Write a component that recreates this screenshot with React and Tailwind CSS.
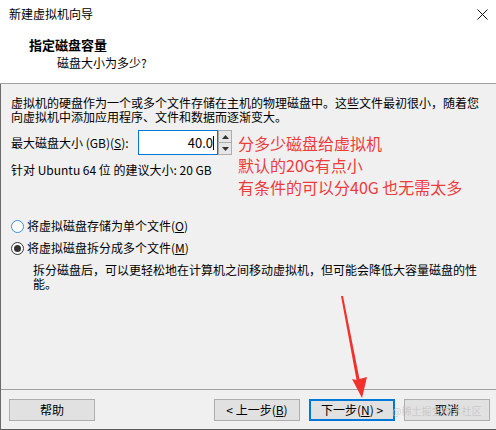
import React from 'react';

const FONT = { fontFamily: '"Noto Sans CJK SC", "Noto Sans", sans-serif' };

function Btn({ children, primary }) {
  return (
    <div
      className={
        'w-[86px] h-[22px] flex items-center justify-center text-[12px] text-black bg-[#e1e1e1] ' +
        (primary ? 'border-2 border-[#0078d7]' : 'border border-[#adadad]')
      }
    >
      {children}
    </div>
  );
}

function Radio({ checked }) {
  return (
    <div
      className={
        'w-[13px] h-[13px] rounded-full bg-white flex items-center justify-center border ' +
        (checked ? 'border-[#333333]' : 'border-[#3c8fd6]')
      }
    >
      {checked && <div className="w-[7px] h-[7px] rounded-full bg-[#333333]" />}
    </div>
  );
}

export default function App() {
  return (
    <div className="w-[496px] h-[430px] relative overflow-hidden flex flex-col text-black" style={FONT}>
      {/* header */}
      <div className="h-[84px] bg-white border-b border-[#a0a0a0] flex flex-col">
        <div className="h-[28px] flex items-center justify-between pl-[9px] pr-[8px]">
          <span className="text-[12px] leading-[14px]">新建虚拟机向导</span>
          <svg width="11" height="11" viewBox="0 0 11 11">
            <path d="M0.5 0.5 L10.5 10.5 M10.5 0.5 L0.5 10.5" stroke="#111" strokeWidth="1" />
          </svg>
        </div>
        <div className="pl-[29px] mt-[8px] text-[13px] leading-[17px] font-bold">指定磁盘容量</div>
        <div className="pl-[57px] mt-[1px] text-[12px] leading-[18px]">磁盘大小为多少?</div>
      </div>

      {/* body */}
      <div className="flex-1 flex flex-col bg-[#f0f0f0] border-l border-l-[#6b6b6b] border-b border-b-[#5a5a5a]">
        <div className="flex-1 flex flex-col pl-[10px] pr-[8px] pt-[12px] text-[12px]">
          <p className="leading-[14px] whitespace-nowrap">
            虚拟机的硬盘作为一个或多个文件存储在主机的物理磁盘中。这些文件最初很小，随着您
            <br />
            向虚拟机中添加应用程序、文件和数据而逐渐变大。
          </p>

          <div className="flex mt-[6px]">
            <div className="flex flex-col">
              <div className="flex items-center h-[25px]">
                <span className="w-[127px] leading-[14px]">
                  最大磁盘大小 (GB)(<span className="underline">S</span>):
                </span>
                <div className="w-[80px] h-[25px] bg-white border border-[#0078d7] flex items-center justify-end pr-[3px]">
                  <span className="text-[13px] leading-[15px]">40.0</span>
                  <span className="w-px h-[14px] bg-black" />
                </div>
                <div className="w-[14px] h-[25px] flex flex-col">
                  <div className="flex-1 border border-[#adadad] bg-[#e6e6e6] flex items-center justify-center">
                    <svg width="7" height="4" viewBox="0 0 7 4"><path d="M0 4 L3.5 0 L7 4 Z" fill="#333" /></svg>
                  </div>
                  <div className="flex-1 border border-t-0 border-[#adadad] bg-[#e6e6e6] flex items-center justify-center">
                    <svg width="7" height="4" viewBox="0 0 7 4"><path d="M0 0 L3.5 4 L7 0 Z" fill="#333" /></svg>
                  </div>
                </div>
              </div>
              <div className="mt-[8px] leading-[14px]">针对 Ubuntu 64 位 的建议大小: 20 GB</div>
            </div>
            <div className="ml-[6px] pt-[2px] text-[16px] leading-[22px] text-[#ee3b3b]">
              <div>分多少磁盘给虚拟机</div>
              <div>默认的20G有点小</div>
              <div>有条件的可以分40G 也无需太多</div>
            </div>
          </div>

          <div className="flex items-center h-[16px] mt-[20px] gap-[3px]">
            <Radio />
            <span className="leading-[14px]">
              将虚拟磁盘存储为单个文件(<span className="underline">O</span>)
            </span>
          </div>
          <div className="flex items-center h-[16px] mt-[6px] gap-[3px]">
            <Radio checked />
            <span className="leading-[14px]">
              将虚拟磁盘拆分成多个文件(<span className="underline">M</span>)
            </span>
          </div>
          <p className="pl-[22px] mt-[7px] leading-[14px] whitespace-nowrap">
            拆分磁盘后，可以更轻松地在计算机之间移动虚拟机，但可能会降低大容量磁盘的性
            <br />
            能。
          </p>
        </div>

        {/* footer */}
        <div className="h-[40px] border-t border-[#a0a0a0] flex items-start pt-[9px] pl-[8px] pr-[6px]">
          <Btn>帮助</Btn>
          <div className="flex-1" />
          <div className="flex gap-[9px]">
            <Btn>
              &lt; 上一步(<span className="underline">B</span>)
            </Btn>
            <Btn primary>
              下一步(<span className="underline">N</span>) &gt;
            </Btn>
            <Btn>取消</Btn>
          </div>
        </div>
      </div>

      {/* annotation arrow */}
      <svg className="absolute left-0 top-0 pointer-events-none" width="496" height="430">
        <polygon
          points="341,296 343,296 359.5,379 367,377 362,398 352,379 356.5,380"
          fill="#f2302c"
        />
      </svg>

      {/* watermark */}
      <div className="absolute left-[392px] top-[405px] text-[10px] leading-[12px] text-[#c4c4c4]/80 pointer-events-none">
        @稀土掘金技术社区
      </div>
    </div>
  );
}
